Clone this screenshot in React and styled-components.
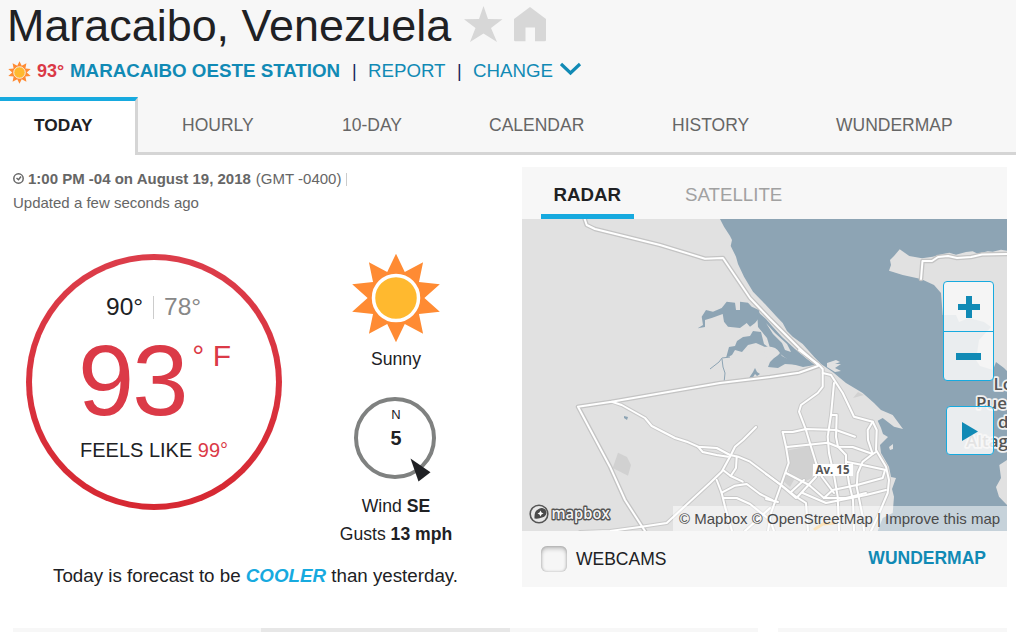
import React from "react";
import styled, { createGlobalStyle, css } from "styled-components";

const BLUE = "#118ab5";
const BRIGHT_BLUE = "#17aadf";
const RED = "#db3a47";
const INK = "#202124";
const PALE = "#f7f7f7";

const GlobalStyle = createGlobalStyle`
    body {
        margin: 0;
        background: #fff;
        color: ${INK};
        font-family: "Liberation Sans", Arial, sans-serif;
        font-size: 17.6px;
        overflow: hidden;
    }
    * {
        box-sizing: border-box;
    }
`;

const Page = styled.div`
    width: 1016px;
    height: 632px;
    display: flex;
    flex-direction: column;
    overflow: hidden;
    white-space: nowrap;
`;
const Header = styled.header`
    height: 155px;
    background: ${PALE};
    flex-shrink: 0;
`;
const TitleRow = styled.div`
    height: 51px;
    padding-left: 7px;
    display: flex;
    align-items: flex-start;
`;
const Title = styled.h1`
    margin: 0;
    width: 457px;
    font-size: 44.9px;
    font-weight: 400;
    line-height: 51px;
`;
const StationRow = styled.div`
    height: 46px;
    padding: 8px 0 0 8px;
    display: flex;
    font-size: 18.7px;
    line-height: 24px;
    color: ${BLUE};

    svg {
        flex-shrink: 0;
    }
`;
const StationTemp = styled.b`
    width: 33px;
    margin-left: 6px;
    color: ${RED};
    font-size: 18px;
`;
const Station = styled.b`
    width: 282px;
    font-size: 18.75px;
`;
const Divider = styled.span`
    width: 16px;
    color: #14205a;
    font-size: 18px;
`;
const HeaderLink = styled.span`
    width: ${(props) => props.$width}px;
`;
const Tabs = styled.nav`
    height: 58px;
    display: flex;
`;
const tabText = css`
    font-size: 17.5px;
    line-height: 20px;
`;
const Tab = styled.div`
    ${tabText}
    padding: 18px 44px 0;
    color: #666;
    border-bottom: 3px solid #d5d5d5;
    width: ${(props) => props.$width}px;

    &:last-child {
        flex-grow: 1;
    }
`;
const ActiveTab = styled.div`
    ${tabText}
    width: 138px;
    padding: 14px 0 0 34px;
    background: #fff;
    border-top: 4px solid ${BRIGHT_BLUE};
    border-right: 3px solid #d5d5d5;
    font-size: 17.3px;
    font-weight: 700;
`;

const Main = styled.main`
    height: 473px;
    display: flex;
    flex-shrink: 0;
`;
const Conditions = styled.section`
    width: 522px;
    padding: 12px 0 0 13px;
`;
const TimeLine = styled.div`
    height: 24px;
    display: flex;
    align-items: center;
    font-size: 15px;
    line-height: 24px;
    color: #666;

    svg {
        margin-right: 4px;
    }
    span {
        margin-left: 5px;
    }
    i {
        width: 1px;
        height: 13px;
        margin-left: 5px;
        background: #ccc;
    }
`;
const Current = styled.div`
    height: 340px;
    display: flex;
    align-items: flex-start;
    padding-top: 39px;
`;
const TempCircle = styled.div`
    width: 256px;
    height: 256px;
    margin-left: 13px;
    border: 6px solid transparent;
    border-radius: 50%;
    background: linear-gradient(#fff, #fff) padding-box,
        linear-gradient(#dc3d4a, #d62832) border-box;
    padding-top: 32px;
`;
const HighLow = styled.div`
    height: 28px;
    padding-left: 74px;
    display: flex;
    font-size: 24.5px;
    line-height: 29px;

    i {
        width: 1px;
        height: 23px;
        margin: 4px 10px 0;
        background: #ccc;
    }
    span {
        color: #888;
    }
`;
const BigTemp = styled.div`
    height: 112px;
    padding-left: 46px;
    display: flex;
    color: ${RED};
    font-size: 101px;
    line-height: 120px;
    letter-spacing: -2px;
`;
const Unit = styled.span`
    margin-left: 6px;
    font-size: 30px;
    line-height: 72px;
    letter-spacing: 0;
`;
const FeelsLike = styled.div`
    padding-left: 48px;
    font-size: 20px;
    line-height: 36px;

    span {
        color: ${RED};
    }
`;
const Sky = styled.div`
    width: 130px;
    margin: -1px 0 0 49px;
    display: flex;
    flex-direction: column;
    align-items: center;
    line-height: 28px;
`;
const SkyLabel = styled.div`
    height: 52px;
    margin-top: 2px;
`;
const Compass = styled.div`
    position: relative;
    width: 82px;
    height: 82px;
    margin: 0 3px 13px 0;
    border: 4px solid #7f8180;
    border-radius: 50%;
    text-align: center;
    padding: 6px 0 0 3px;

    div {
        font-size: 13px;
        line-height: 16px;
    }
    b {
        display: block;
        font-size: 19.8px;
        line-height: 30px;
    }
    svg {
        position: absolute;
        left: 52px;
        top: 57px;
    }
`;
const Forecast = styled.p`
    margin: 9px 0 0 40px;
    font-size: 18.75px;
    line-height: 24px;

    em {
        color: ${BRIGHT_BLUE};
        font-weight: 700;
    }
`;

const RadarPanel = styled.section`
    width: 485px;
    height: 420px;
    margin-top: 12px;
    background: ${PALE};
`;
const RadarTabs = styled.div`
    height: 52px;
    padding-left: 19px;
    display: flex;
    font-size: 18.7px;
    line-height: 55px;
`;
const RadarTab = styled.div`
    height: 52px;
    width: 93px;
    padding-left: 12.5px;
    font-weight: 700;
    border-bottom: 5px solid ${BRIGHT_BLUE};
`;
const SatelliteTab = styled.div`
    padding-left: 51px;
    color: #a1a1a1;
`;
const MapBox = styled.div`
    position: relative;
    height: 312px;
    overflow: hidden;

    > svg {
        display: block;
    }
`;
const ZoomControl = styled.div`
    position: absolute;
    left: 421px;
    top: 62px;
    width: 51px;
    height: 100px;
    border: 1px solid ${BRIGHT_BLUE};
    border-radius: 4px;
    background: rgba(247, 247, 247, 0.88);
`;
const ZoomButton = styled.div`
    height: 49px;
    display: flex;
    align-items: center;
    justify-content: center;

    & + & {
        height: 50px;
        border-top: 1px solid ${BRIGHT_BLUE};
    }
`;
const PlayButton = styled.div`
    position: absolute;
    left: 424px;
    top: 187px;
    width: 48px;
    height: 49px;
    display: flex;
    align-items: center;
    justify-content: center;
    border: 1px solid ${BRIGHT_BLUE};
    border-radius: 4px;
    background: rgba(247, 247, 247, 0.88);
    padding-top: 2px;
`;
const Attribution = styled.div`
    position: absolute;
    right: 0;
    bottom: 0;
    width: 334px;
    height: 25px;
    padding-left: 6px;
    background: rgba(255, 255, 255, 0.5);
    color: #4a4a4a;
    font-size: 15px;
    line-height: 25px;
`;
const PanelFooter = styled.div`
    height: 56px;
    padding: 0 21px 0 19px;
    display: flex;
    align-items: center;
    font-size: 17.5px;

    b {
        margin-left: auto;
        color: ${BLUE};
        font-size: 17.5px;
        padding-bottom: 2px;
    }
`;
const Checkbox = styled.span`
    width: 26px;
    height: 26px;
    margin-right: 9px;
    border-radius: 6px;
    background: #f6f6f6;
    box-shadow: inset 0 3px 4px rgba(0, 0, 0, 0.2), inset 0 0 3px rgba(0, 0, 0, 0.25);
`;

const BottomStrips = styled.div`
    height: 4px;
    padding-left: 13px;
    display: flex;
`;
const Strip = styled.div`
    width: ${(props) => props.$width}px;
    margin-right: ${(props) => props.$gap || 0}px;
    background: ${(props) => (props.$dark ? "#e7e7e7" : PALE)};
`;

const sunPoints = Array.from({ length: 20 }, (_, i) => {
    const radius = i % 2 ? 27.3 : 44.3;
    const angle = (i * Math.PI) / 10;
    return `${(45 + radius * 1.04 * Math.sin(angle)).toFixed(2)},${(45 - radius * Math.cos(angle)).toFixed(2)}`;
}).join(" ");

const Sun = ({ size, ring = "#fff" }) => (
    <svg width={size} height={size} viewBox="0 0 90 90">
        <polygon points={sunPoints} fill="#ff8b33" />
        <circle cx="45" cy="45" r="22.5" fill="#ffb92f" stroke={ring} strokeWidth="3.5" />
    </svg>
);

const water = "#8da4b4";
const land = "#e1e1e1";

// primary roads, drawn with a wider casing
const highways = [
    "M584 217L586.7 225L595 229L660 245L705 258.7L723 258L750 298L770 319L799 348L818 365",
    "M818 366L799 372.7L770 377L720 383L611.7 401.7L578 406.7L610 466.7L625 500L645 531",
    "M921 279L922.5 261L932 261L938 257L948 256L957 258L971 257L982 254.5L1007 254",
];

const streets = [
    "M611.7 401.7L621.7 405L645 418L651.7 426L675 438L686.7 441.7L698 446.7L716.7 448L730 455L738 456.7L750 461.7L770 476.7L781 485L796 496.7L806 503L808 531",
    "M698 446.7L702.7 452L716.7 455L728 456.7",
    "M756 427L743 440L735 446.7L730 456.7L721.7 471.7L710 483L666.7 523L641.7 526.7L610 531L580 532",
    "M736.7 456.7L736 468L730.7 476",
    "M723 470L730.7 476L742.7 481.7",
    "M716.7 480L721.7 493L725 506.7L732 531",
    "M721.7 492.7L735 485.7L746.7 484L760 494L772 500",
    "M723 498L736.7 498L750 504L770 520L774 531",
    "M799 350L818 364L822.7 369L822.7 386.7L817.7 393L801 405L799 411.7L806 430L811 446.7L816 463L822 477L834 493",
    "M822.7 373L831 375L842.7 393L854 416.7L872.7 421.7L876.7 430L876 450L886 466.7L889 480L887.7 493L877.7 516.7L871 531",
    "M834 383L831 415L827.7 436.7L829 453L834 475L837.7 496.7L839 531",
    "M782.7 432L792.7 432L806 429L836 430L855 436.7",
    "M782.7 432L786 446.7L788.7 463L781 485L771 513L768 531",
    "M786.7 447L827.7 442.7L837.7 446.7L852.7 447L872.7 454L876 452",
    "M831 415L836.7 415L836 437L838 446.7L846 455L846 461.7L862.7 465L886 470",
    "M872.7 421.7L867.7 430L868 440L872.7 454L862.7 461.7L857.7 473L856.7 486.7L862.7 516.7L864 531",
    "M846 463L849 483L853 500L854 531",
    "M786 473L809 485L824 498L846 498L866 493",
    "M802.7 493L826 503L866 495L886 490",
    "M816 476.7L797.7 496.7",
    "M804 480L791 492",
    "M824 498L832.7 490L857 485L882.7 478L885 470",
    "M766 474L781 485L796 498",
    "M766 499L778 502",
    "M745 531L770 508",
];

const MapDrawing = () => (
    <svg width="485" height="312" viewBox="522 219 485 312">
        <rect x="522" y="219" width="485" height="312" fill={land} />
        <path
            fill={water}
            d="M720 219L724 226.7L730 236L732 240L730.7 246L736 256.7L738 264L744 276.7L753 291.7L765 304L776 316L782.7 323L787 331L792.7 336.7L802.7 344L814 356.7L821 364L832.7 372L846 383L862.7 393L874 403L881 410L892.7 415L903 429L894 426.7L882.7 418L877.7 420.7L881 428L883 434L888 437L880 445L881 453L889 466.7L891 477L896 478L892 489L894 496.7L892.7 513L882.7 518L877.7 531H1007V219Z"
        />
        <g fill={water}>
            <path d="M697.7 328.3L703 325L701.7 316.7L706 310L713 311.7L721.7 308L726.7 301.7L735 302.7L736 310L740 310L740 301.7L748 302.7L751.7 306.7L759 310L760 316.7L755 323L750 326.7L746.7 323L740 328L728 326.7L724 321.7L722.7 314L711.7 318L705 320L705 327Z" />
            <path d="M726 358L729 347L735 346L737 341L743 337L750 336L753 331L761 332L764 344L768 347L778 350L782 356L790 360L801 365L785 364L778 368L768 367L770 362L775 357L765 347L756 343L748 345L742 352L735 350L732 355Z" />
            <path d="M757 311L766 319L772 326L782 337L795 349L807 359L815 365L803 367L792 364L787 359L779 353L770 348L767 338L758 327Z" />
            <path d="M749 378L753 372L755 368L757 372L760 374L757 376L755 374L752 379Z" />
            <path d="M624 416L628 417L627 420L624 418Z" />
        </g>
        <path d="M730 357L722 358L719 362L710 369M722 359L723 367L725 373L724 383" fill="none" stroke={water} />
        <path
            fill={land}
            d="M899.7 249.3L909.3 256L922 258.3L932.7 256.7L942.7 254L949.3 252.7L956 254.7L966 252L972.7 251.3L977.7 253.7L987.7 251.3L992.7 251.7L1001 249.7L1007 250.7V371L1004 368L996 362L993 370L980 366L976 360L979 340L991 327L984 322L969 318L959 322L956 315L942.7 315L941 293L934 285L921 279L902.7 275L889 270.7L891 265L890 260L894 256ZM1007 460L999.3 465L1001 478L996 487L999 496.7L1007 505Z"
        />
        <path
            fill={land}
            d="M764 347Q775 345 780 353Q774 361 765 357ZM766 323L775 333L787 344L791 352L785 350L782 343L773 334ZM827 363L836 360L840 362L835 364L841 364L835 368L841 371L835 372L827 367ZM889 447L893 444L893 449L890 450Z"
        />
        <path
            fill="#d1d1d1"
            d="M618 452.7L627 457L631 465L628 475.7L612.7 468ZM789 450L811 446L814 462L812 478L804 482L789 473ZM783 474L795 478L790 487L782 480ZM853 398L858 392L864 395Z"
        />
        <g fill="none" strokeLinejoin="round" strokeLinecap="round">
            {streets.map((d) => (
                <path key={d} d={d} stroke="#c9c9c9" strokeWidth="4" />
            ))}
            {highways.map((d) => (
                <path key={d} d={d} stroke="#c4c4c4" strokeWidth="4.6" />
            ))}
            {streets.map((d) => (
                <path key={d} d={d} stroke="#fff" strokeWidth="2" />
            ))}
            {highways.map((d) => (
                <path key={d} d={d} stroke="#fff" strokeWidth="2" />
            ))}
            <path d="M815 529L823 524L834 523" stroke="#f6c675" strokeWidth="3" />
        </g>
        <g
            fontFamily="'Open Sans', 'Noto Sans', sans-serif"
            fontSize="17"
            fontWeight="600"
            fill="#555"
            stroke="#f1f1f1"
            strokeWidth="3.5"
            strokeLinejoin="round"
            paintOrder="stroke"
        >
            <text x="993.5" y="390">Lo</text>
            <text x="976" y="409">Pue</text>
            <text x="998" y="428">d</text>
            <text x="966" y="447">Altag</text>
        </g>
        <rect x="813" y="464" width="40" height="12" fill="#fff" />
        <text
            x="815.5"
            y="474"
            fontFamily="'Open Sans', 'Noto Sans', sans-serif"
            fontSize="11.5"
            fontWeight="700"
            fill="#555"
            textLength="34"
        >
            Av. 15
        </text>
        <circle cx="539" cy="514" r="8.8" fill="#e8e8e8" stroke="#555" strokeWidth="1.6" />
        <path d="M534.5 518.5Q534 511 538 509.5A4.8 4.8 0 1 1 542 517.5Q539 519 534.5 518.5Z" fill="#4a4a4a" />
        <path d="M540.5 510.5L541.5 512.5L543.5 513.5L541.5 514.5L540.5 516.5L539.5 514.5L537.5 513.5L539.5 512.5Z" fill="#fff" />
        <text
            x="551.5"
            y="518.5"
            fontFamily="'Open Sans', 'Noto Sans', sans-serif"
            fontSize="16"
            fontWeight="600"
            fill="#f4f4f4"
            stroke="#555"
            strokeWidth="2.8"
            strokeLinejoin="round"
            paintOrder="stroke"
            textLength="58"
            lengthAdjust="spacingAndGlyphs"
        >
            mapbox
        </text>
    </svg>
);

export default function App() {
    return (
        <Page>
            <GlobalStyle />
            <Header>
                <TitleRow>
                    <Title>Maracaibo, Venezuela</Title>
                    <svg width="84" height="46" viewBox="464 0 84 46" fill="#d7d7d7">
                        <path d="M483.5 6L488 19L502.5 19.3L491 28L497 42L483.5 33.5L470 42L475.5 28L464 19.3L479 19Z" />
                        <path d="M514 19L530 7L546 19V40Q546 41.3 544.7 41.3H535V27.5H525.5V41.3H515.3Q514 41.3 514 40Z" />
                    </svg>
                </TitleRow>
                <StationRow>
                    <svg width="23" height="26" viewBox="0 0 23 26">
                        <g transform="translate(0 2)">
                            <Sun size={23} ring={PALE} />
                        </g>
                    </svg>
                    <StationTemp>93°</StationTemp>
                    <Station>MARACAIBO OESTE STATION</Station>
                    <Divider>|</Divider>
                    <HeaderLink $width={89}>REPORT</HeaderLink>
                    <Divider>|</Divider>
                    <HeaderLink $width={87}>CHANGE</HeaderLink>
                    <svg width="22" height="22" viewBox="0 0 22 22">
                        <path d="M1 5L10.5 14L20 5" fill="none" stroke={BLUE} strokeWidth="3.2" />
                    </svg>
                </StationRow>
                <Tabs>
                    <ActiveTab>TODAY</ActiveTab>
                    <Tab $width={160}>HOURLY</Tab>
                    <Tab $width={147}>10-DAY</Tab>
                    <Tab $width={183}>CALENDAR</Tab>
                    <Tab $width={164}>HISTORY</Tab>
                    <Tab>WUNDERMAP</Tab>
                </Tabs>
            </Header>

            <Main>
                <Conditions>
                    <TimeLine>
                        <svg width="11" height="12" viewBox="0 0 11 12" fill="none" stroke="#666" strokeWidth="1.5">
                            <circle cx="5.5" cy="5.5" r="4.7" />
                            <path d="M3.5 5L5.5 6.7L8 3.5" />
                        </svg>
                        <b>1:00 PM -04 on August 19, 2018</b>
                        <span>(GMT -0400)</span>
                        <i />
                    </TimeLine>
                    <TimeLine>Updated a few seconds ago</TimeLine>
                    <Current>
                        <TempCircle>
                            <HighLow>
                                90°<i />
                                <span>78°</span>
                            </HighLow>
                            <BigTemp>
                                93<Unit>° F</Unit>
                            </BigTemp>
                            <FeelsLike>
                                FEELS LIKE <span>99°</span>
                            </FeelsLike>
                        </TempCircle>
                        <Sky>
                            <Sun size={90} />
                            <SkyLabel>Sunny</SkyLabel>
                            <Compass>
                                <div>N</div>
                                <b>5</b>
                                <svg width="22" height="24" viewBox="410 458 22 24">
                                    <path d="M410.5 458.5L430.5 472.3L418.5 481.5Z" fill={INK} />
                                </svg>
                            </Compass>
                            <div>
                                Wind <b>SE</b>
                            </div>
                            <div>
                                Gusts <b>13 mph</b>
                            </div>
                        </Sky>
                    </Current>
                    <Forecast>
                        Today is forecast to be <em>COOLER</em> than yesterday.
                    </Forecast>
                </Conditions>

                <RadarPanel>
                    <RadarTabs>
                        <RadarTab>RADAR</RadarTab>
                        <SatelliteTab>SATELLITE</SatelliteTab>
                    </RadarTabs>
                    <MapBox>
                        <MapDrawing />
                        <Attribution>© Mapbox © OpenStreetMap | Improve this map</Attribution>
                        <ZoomControl>
                            <ZoomButton>
                                <svg width="24" height="24" fill={BLUE}>
                                    <path d="M9 1h6v8h8v6h-8v8h-6v-8h-8v-6h8z" />
                                </svg>
                            </ZoomButton>
                            <ZoomButton>
                                <svg width="25" height="7">
                                    <rect width="25" height="7" fill={BLUE} />
                                </svg>
                            </ZoomButton>
                        </ZoomControl>
                        <PlayButton>
                            <svg width="16" height="19">
                                <path d="M0 0L16 9.5L0 19Z" fill={BLUE} />
                            </svg>
                        </PlayButton>
                    </MapBox>
                    <PanelFooter>
                        <Checkbox />
                        WEBCAMS
                        <b>WUNDERMAP</b>
                    </PanelFooter>
                </RadarPanel>
            </Main>

            <BottomStrips>
                <Strip $width={248} />
                <Strip $width={249} $dark />
                <Strip $width={248} $gap={20} />
                <Strip $width={229} />
            </BottomStrips>
        </Page>
    );
}
